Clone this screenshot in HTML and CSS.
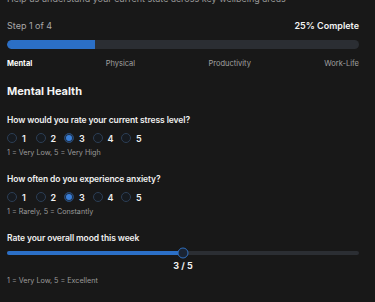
FILE: index.html
```html
<!DOCTYPE html>
<html lang="en">
<head>
<meta charset="utf-8">
<link rel="stylesheet" href="styles.css">
</head>
<body>
<div class="page">
  <p class="subtitle">Help us understand your current state across key wellbeing areas</p>
  <div class="step-row"><span class="step">Step 1 of 4</span><span class="pct">25% Complete</span></div>
  <div class="progress"><div class="progress-fill" style="width:25%"></div></div>
  <div class="steps"><span class="active">Mental</span><span>Physical</span><span>Productivity</span><span>Work-Life</span></div>
  <h2 class="section-title">Mental Health</h2>

  <div class="question">
    <div class="q-title">How would you rate your current stress level?</div>
    <div class="radios">
      <span class="opt"><span class="radio"></span><span class="lbl">1</span></span>
      <span class="opt"><span class="radio"></span><span class="lbl">2</span></span>
      <span class="opt"><span class="radio checked"></span><span class="lbl">3</span></span>
      <span class="opt"><span class="radio"></span><span class="lbl">4</span></span>
      <span class="opt"><span class="radio"></span><span class="lbl">5</span></span>
    </div>
    <div class="hint">1 = Very Low, 5 = Very High</div>
  </div>

  <div class="question">
    <div class="q-title">How often do you experience anxiety?</div>
    <div class="radios">
      <span class="opt"><span class="radio"></span><span class="lbl">1</span></span>
      <span class="opt"><span class="radio"></span><span class="lbl">2</span></span>
      <span class="opt"><span class="radio checked"></span><span class="lbl">3</span></span>
      <span class="opt"><span class="radio"></span><span class="lbl">4</span></span>
      <span class="opt"><span class="radio"></span><span class="lbl">5</span></span>
    </div>
    <div class="hint">1 = Rarely, 5 = Constantly</div>
  </div>

  <div class="question">
    <div class="q-title">Rate your overall mood this week</div>
    <div class="slider">
      <div class="slider-fill" style="width:50%"></div>
      <div class="thumb" style="left:50%"></div>
    </div>
    <div class="slider-value">3 / 5</div>
    <div class="hint last">1 = Very Low, 5 = Excellent</div>
  </div>
</div>
</body>
</html>
```

FILE: styles.css
```css
html, body {
  margin: 0;
  padding: 0;
  background: #181818;
}
body {
  font-family: Inter, "Noto Sans", sans-serif;
  color: #e6e6e6;
  overflow: hidden;
}
.page {
  padding: 0 16px 0 7px;
  margin-top: -7px;
}
.subtitle {
  margin: 0;
  font-size: 9px;
  line-height: 12px;
  color: #9a9a9a;
}
.step-row {
  display: flex;
  justify-content: space-between;
  align-items: center;
  margin-top: 13px;
  height: 14px;
}
.step {
  font-size: 9px;
  color: #a8a8a8;
}
.pct {
  font-size: 9px;
  font-weight: 600;
  color: #f2f2f2;
}
.progress {
  margin-top: 8px;
  height: 9px;
  border-radius: 5px;
  background: #2b2e33;
  overflow: hidden;
}
.progress-fill {
  height: 100%;
  background: #2b6fc6;
  border-radius: 5px 0 0 5px;
}
.steps {
  display: flex;
  justify-content: space-between;
  margin-top: 10px;
  font-size: 7.5px;
  line-height: 10px;
  color: #a0a0a0;
}
.steps .active {
  color: #ffffff;
  font-weight: 700;
}
.section-title {
  margin: 15px 0 1px;
  font-size: 11px;
  line-height: 14px;
  font-weight: 700;
  color: #f4f4f4;
}
.question {
  margin-top: 16px;
}
.question + .question {
  margin-top: 15px;
}
.q-title {
  font-size: 8.5px;
  line-height: 12px;
  font-weight: 600;
  letter-spacing: -0.1px;
  color: #f0f0f0;
}
.radios {
  display: flex;
  gap: 8.5px;
  margin-top: 6px;
  height: 12px;
  align-items: center;
}
.opt {
  display: flex;
  align-items: center;
  gap: 5px;
}
.radio {
  width: 8px;
  height: 8px;
  border-radius: 50%;
  border: 1px solid #2c3e55;
  background: #161a1f;
}
.radio.checked {
  background: #3a7fd9;
  border-color: #27456b;
  box-shadow: inset 0 0 0 1px #1b2b40;
}
.lbl {
  font-size: 9px;
  font-weight: 600;
  color: #f0f0f0;
  width: 5px;
}
.hint {
  margin-top: 4px;
  font-size: 7.2px;
  line-height: 10px;
  color: #9a9a9a;
}
.slider {
  position: relative;
  margin-top: 7px;
  height: 4px;
  border-radius: 2px;
  background: #2b2e33;
}
.slider-fill {
  height: 100%;
  background: #2b6fc6;
  border-radius: 2px 0 0 2px;
}
.thumb {
  position: absolute;
  top: 50%;
  width: 9px;
  height: 9px;
  border-radius: 50%;
  border: 1.5px solid #2f6fbf;
  background: #1a2433;
  transform: translate(-50%, -50%);
}
.slider-value {
  margin-top: 5px;
  text-align: center;
  font-size: 9px;
  line-height: 12px;
  font-weight: 700;
  color: #f0f0f0;
}
.hint.last {
  margin-top: 4px;
}
```
